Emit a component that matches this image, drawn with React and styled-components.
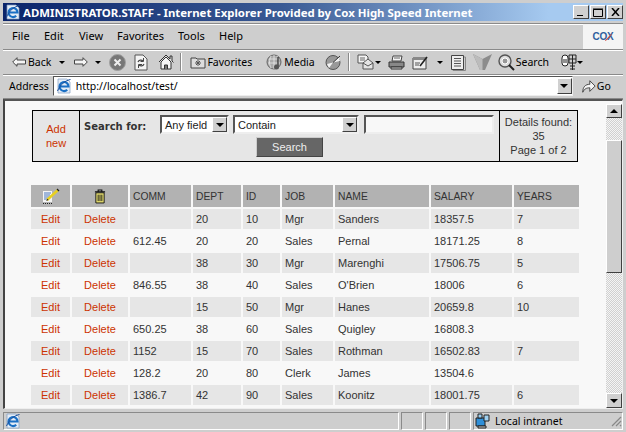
import React from 'react'
import styled, {createGlobalStyle} from 'styled-components'

const GlobalStyle = createGlobalStyle`
    html, body {
        margin: 0;
        padding: 0;
        background: #cecece;
    }
`
const bevelOut = 'border-top: 1px solid #fff; border-left: 1px solid #fff; border-right: 1px solid #404040; border-bottom: 1px solid #404040;'

const Window = styled.div`
    width: 626px;
    height: 432px;
    box-sizing: border-box;
    padding: 3px 3px 2px 3px;
    background: #cecece;
    display: flex;
    flex-direction: column;
    overflow: hidden;
    font-family: "Noto Sans", sans-serif;
    font-size: 11px;
    color: #000;
`
const TitleBar = styled.div`
    height: 18px;
    flex: none;
    display: flex;
    align-items: center;
    padding: 0 0 0 2px;
    background: linear-gradient(90deg, #0a246a 0%, #3a5a94 45%, #a6caf0 88%);
`
const TitleText = styled.div`
    flex: 1;
    margin-left: 2px;
    color: #fff;
    font-family: "Noto Sans", sans-serif;
    font-weight: 700;
    font-size: 11.4px;
    white-space: nowrap;
`
const WinButtons = styled.div`
    display: flex;
`
const WinButton = styled.div`
    width: 16px;
    height: 14px;
    box-sizing: border-box;
    background: #d0d0d0;
    ${bevelOut}
    margin-left: ${props => props.$gap || 0}px;
    display: flex;
    align-items: center;
    justify-content: center;
`
const MenuRow = styled.div`
    height: 27px;
    margin-top: 2px;
    flex: none;
    display: flex;
    align-items: stretch;
    border-top: 1px solid #8a8a8a;
    border-bottom: 1px solid #8a8a8a;
    box-shadow: inset 0 1px 0 #fff;
    box-sizing: border-box;
`
const Menu = styled.div`
    flex: 1;
    display: flex;
    align-items: center;
    padding: 0 0 3px 9px;
`
const MenuItem = styled.span`
    width: ${props => props.$w}px;
`
const Brand = styled.div`
    width: 40px;
    background: #f4f4f4;
    display: flex;
    align-items: center;
    justify-content: center;
`
const BrandMark = styled.span`
    position: relative;
    font-family: "Liberation Sans", sans-serif;
    font-weight: 700;
    font-size: 10px;
    letter-spacing: -0.2px;
    color: #2f5f9e;
    &::after {
        content: "";
        position: absolute;
        right: 1px;
        top: 6px;
        width: 9px;
        height: 1px;
        background: #d04a40;
        transform: rotate(-45deg);
    }
`
const ToolRow = styled.div`
    height: 25px;
    flex: none;
    box-sizing: border-box;
    display: flex;
    align-items: center;
    padding-left: 9px;
    border-bottom: 1px solid #8a8a8a;
    box-shadow: inset 0 1px 0 #fff;
`
const Tool = styled.div`
    display: flex;
    align-items: center;
    flex: none;
    margin-left: ${props => props.$ml || 0}px;
`
const ToolLabel = styled.span`
    font-size: 10.5px;
    margin-left: ${props => props.$ml ?? 1}px;
`
const Caret = styled.span`
    width: 0;
    height: 0;
    flex: none;
    border-left: 3px solid transparent;
    border-right: 3px solid transparent;
    border-top: 3px solid #000;
    margin-left: ${props => props.$ml || 0}px;
`
const ToolSep = styled.div`
    width: 1px;
    height: 18px;
    flex: none;
    background: #8a8a8a;
    border-right: 1px solid #fff;
    margin-left: ${props => props.$ml || 0}px;
`
const AddressRow = styled.div`
    height: 24px;
    flex: none;
    box-sizing: border-box;
    display: flex;
    align-items: center;
    padding: 0 4px 1px 6px;
    font-size: 10.5px;
    border-bottom: 1px solid #8a8a8a;
    box-shadow: inset 0 1px 0 #fff;
`
const AddressBox = styled.div`
    width: 520px;
    height: 20px;
    box-sizing: border-box;
    margin-left: 4px;
    background: #fff;
    border: 1px solid;
    border-color: #555 #eee #eee #555;
    display: flex;
    align-items: center;
    padding-left: 2px;
`
const AddressText = styled.span`
    flex: 1;
    margin-left: 4px;
`
const ComboButton = styled.div`
    width: ${props => props.$w || 15}px;
    height: ${props => props.$h || 16}px;
    flex: none;
    box-sizing: border-box;
    background: #d0d0d0;
    ${bevelOut}
    display: flex;
    align-items: center;
    justify-content: center;
`
const Arrow = styled.span`
    width: 0;
    height: 0;
    border-left: 4px solid transparent;
    border-right: 4px solid transparent;
    ${props => props.$up ? 'border-bottom: 4px solid #000;' : 'border-top: 4px solid #000;'}
`
const GoButton = styled.div`
    flex: 1;
    display: flex;
    align-items: center;
    justify-content: center;
    gap: 1px;
`
const Viewport = styled.div`
    flex: 1;
    min-height: 0;
    display: flex;
    background: #f8f8f8;
    border: 1px solid;
    border-color: #555 #eee #eee #555;
    border-top: 2px solid #555;
    border-left: 2px solid #444;
    margin: 0 0 3px 0;
`
const Page = styled.div`
    flex: 1;
    min-width: 0;
    overflow: hidden;
    padding: 9px 0 0 27px;
    font-family: "Liberation Sans", sans-serif;
    font-size: 11px;
    color: #333;
`
const SearchPanel = styled.div`
    width: 546px;
    height: 52px;
    box-sizing: border-box;
    display: flex;
    background: #e6e6e6;
    border: 1px solid #000;
`
const AddCell = styled.div`
    width: 47px;
    flex: none;
    box-sizing: border-box;
    border-right: 1px solid #000;
    display: flex;
    align-items: center;
    justify-content: center;
    text-align: center;
    line-height: 14px;
    color: #cc3300;
`
const SearchCell = styled.div`
    flex: 1;
    display: flex;
    flex-direction: column;
    padding: 4px 0 0 4px;
`
const SearchRow = styled.div`
    display: flex;
    align-items: center;
`
const SearchLabel = styled.b`
    width: 76px;
    padding-top: 3px;
    color: #333;
    font-family: "DejaVu Sans", sans-serif;
    font-size: 10px;
`
const Select = styled.div`
    width: ${props => props.$w}px;
    height: 19px;
    box-sizing: border-box;
    margin-right: ${props => props.$mr}px;
    background: #fff;
    border: 2px solid;
    border-color: #555 #eee #eee #555;
    display: flex;
    align-items: center;
    padding-left: 3px;
    justify-content: space-between;
    color: #222;
`
const TextInput = styled.div`
    width: 130px;
    height: 19px;
    box-sizing: border-box;
    background: #f8f8f8;
    border: 2px solid;
    border-color: #555 #eee #eee #555;
`
const SearchButton = styled.div`
    width: 67px;
    height: 20px;
    box-sizing: border-box;
    margin: 3px 0 0 172px;
    background: #666;
    color: #eee;
    display: flex;
    align-items: center;
    justify-content: center;
    border: 1px solid;
    border-color: #ccc #444 #444 #ccc;
`
const DetailsCell = styled.div`
    width: 78px;
    flex: none;
    box-sizing: border-box;
    border-left: 1px solid #000;
    display: flex;
    flex-direction: column;
    justify-content: center;
    text-align: center;
    line-height: 14px;
`
const Table = styled.table`
    margin: 21px 0 0 -3px;
    table-layout: fixed;
    width: 552px;
    border-collapse: separate;
    border-spacing: 2px;
`
const HeadCell = styled.th`
    height: 22px;
    padding: 0 0 0 3px;
    background: #b2b2b2;
    text-align: left;
    font-size: 10.3px;
    font-weight: 400;
    color: #333;
    vertical-align: middle;
`
const IconHeadCell = styled(HeadCell)`
    padding: 0;
    text-align: center;
    line-height: 0;
`
const Cell = styled.td`
    height: 20px;
    padding: 0 0 0 3px;
    background: ${props => props.$odd ? '#e6e6e6' : 'transparent'};
    vertical-align: middle;
`
const LinkCell = styled(Cell)`
    text-align: center;
    padding: 0;
    color: #cc3300;
`
const Scrollbar = styled.div`
    width: 16px;
    flex: none;
    margin-top: 3px;
    display: flex;
    flex-direction: column;
    background-color: #f0f0f0;
    background-image: conic-gradient(#d0d0d0 25%, #f4f4f4 0 50%, #d0d0d0 0 75%, #f4f4f4 0);
    background-size: 2px 2px;
`
const ScrollThumb = styled.div`
    height: 133px;
    margin-top: 22px;
    box-sizing: border-box;
    background: #cecece;
    ${bevelOut}
`
const ScrollSpacer = styled.div`
    flex: 1;
`
const StatusBar = styled.div`
    height: 18px;
    flex: none;
    display: flex;
    gap: 2px;
    font-size: 10.5px;
`
const StatusPane = styled.div`
    width: ${props => props.$w ? props.$w + 'px' : 'auto'};
    flex: ${props => props.$w ? 'none' : 1};
    box-sizing: border-box;
    border: 1px solid;
    border-color: #8a8a8a #fff #fff #8a8a8a;
    display: flex;
    align-items: center;
    gap: 4px;
    padding-left: 1px;
`
const Grip = styled.svg`
    margin-left: auto;
`

const IeIcon = () => (
    <svg width="16" height="16" viewBox="0 0 16 16">
        <path d="M2 1h9l3 3v11H2z" fill="#e4ecf6" stroke="#7f9cc0" strokeWidth=".7"/>
        <path d="M3.5 8.5h9a4.5 4.5 0 1 0-1.3 3.2" fill="none" stroke="#1a6fc4" strokeWidth="2.2"/>
        <path d="M1.5 13C4 7 9 2.5 14.5 1.5" fill="none" stroke="#1a4f9c" strokeWidth="1"/>
    </svg>
)
const LeftArrow = ({flip}) => (
    <svg width="14" height="10" viewBox="0 0 14 10" style={flip ? {transform: 'scaleX(-1)'} : undefined}>
        <path d="M.7 5L5 .7V3h8.5v4H5v2.3z" fill="#f4f4f4" stroke="#444"/>
    </svg>
)
const StopIcon = () => (
    <svg width="17" height="17" viewBox="0 0 17 17">
        <circle cx="8.5" cy="8.5" r="8" fill="#777" stroke="#a0a0a0"/>
        <path d="M5.5 5.5l6 6M11.5 5.5l-6 6" stroke="#eee" strokeWidth="2"/>
    </svg>
)
const RefreshIcon = () => (
    <svg width="14" height="17" viewBox="0 0 14 17">
        <path d="M1 1h8l4 4v11H1z" fill="#f4f4f4" stroke="#555"/>
        <path d="M4 8a3 3 0 0 1 5-1M10 10a3 3 0 0 1-5 1" fill="none" stroke="#444" strokeWidth="1.2"/>
        <path d="M9.5 4v3.5H6.5M4.5 14v-3.5H8" fill="none" stroke="#444"/>
    </svg>
)
const HomeIcon = () => (
    <svg width="16" height="16" viewBox="0 0 16 16">
        <path d="M1 8l7-7 4 4V2h2v5l1.5 1.5" fill="#ddd" stroke="#333"/>
        <path d="M3 8v7h10V8L8 3z" fill="#f6f6f6" stroke="#333"/>
        <path d="M6.5 15v-4h3v4" fill="#777" stroke="#333"/>
    </svg>
)
const FavIcon = () => (
    <svg width="16" height="14" viewBox="0 0 16 14">
        <path d="M1 3h5l1 1h8v9H1z" fill="#ddd" stroke="#444"/>
        <path d="M8 5v6M5 8h6M6 6l4 4M10 6l-4 4" stroke="#555"/>
    </svg>
)
const MediaIcon = () => (
    <svg width="17" height="17" viewBox="0 0 17 17">
        <circle cx="8" cy="8" r="7" fill="#aaa" stroke="#666"/>
        <path d="M3 5h10M2 9h12M8 1v14M5 2c-2 4-2 8 0 12M11 2c2 4 2 8 0 12" fill="none" stroke="#e8e8e8" strokeWidth=".8"/>
        <path d="M12 3v9" stroke="#222" strokeWidth="1.2"/>
        <circle cx="10.5" cy="13" r="2.5" fill="#555"/>
    </svg>
)
const HistoryIcon = () => (
    <svg width="16" height="16" viewBox="0 0 16 16">
        <circle cx="8" cy="8.5" r="7" fill="#999" stroke="#555"/>
        <path d="M8 8.5L14 3l1 4zM8 8.5L2 10l2 4z" fill="#f4f4f4"/>
        <path d="M8 8.5L15 2" stroke="#333"/>
    </svg>
)
const MailIcon = () => (
    <svg width="18" height="17" viewBox="0 0 18 17">
        <path d="M1 1h8l2 2v6H1z" fill="#f4f4f4" stroke="#555"/>
        <path d="M3 4h5M3 6h5" stroke="#666"/>
        <path d="M6 15V9l5-4 5 4v6z" fill="#e4e4e4" stroke="#555"/>
        <path d="M6 9l5 3 5-3" fill="none" stroke="#555"/>
    </svg>
)
const PrintIcon = () => (
    <svg width="17" height="15" viewBox="0 0 17 15">
        <path d="M5 1h9l-1 5H4z" fill="#f4f4f4" stroke="#444"/>
        <path d="M1 7h15v5H1z" fill="#888" stroke="#333"/>
        <path d="M3 12h11v2H3z" fill="#ccc" stroke="#333"/>
        <path d="M6 3h6" stroke="#666"/>
    </svg>
)
const EditIcon = () => (
    <svg width="17" height="15" viewBox="0 0 17 15">
        <path d="M1 3h13v11H1z" fill="#eee" stroke="#444"/>
        <path d="M1 3h13v2H1z" fill="#888"/>
        <path d="M3 8h5M3 10h4" stroke="#555"/>
        <path d="M8 11l7-9" stroke="#222" strokeWidth="1.6"/>
    </svg>
)
const NoteIcon = () => (
    <svg width="16" height="17" viewBox="0 0 16 17">
        <path d="M1.5 1.5h12v14h-12z" fill="#eee" stroke="#444"/>
        <path d="M14 3h1.5v13.5H3V16" fill="none" stroke="#888"/>
        <path d="M4 4.5h7M4 7h7M4 9.5h7M4 12h7" stroke="#555"/>
    </svg>
)
const FilterIcon = () => (
    <svg width="19" height="16" viewBox="0 0 19 16">
        <path d="M0 0l9.500 5L19 0l-7 16H7z" fill="#8c8c8c"/>
        <path d="M0 0l9.500 5v11H7z" fill="#bcbcbc"/>
    </svg>
)
const SearchIcon = () => (
    <svg width="17" height="17" viewBox="0 0 17 17">
        <circle cx="7" cy="7" r="6" fill="#ddd" stroke="#555" strokeWidth="1.4"/>
        <circle cx="7" cy="7" r="3" fill="#999" stroke="#fff"/>
        <path d="M11 11l5 5" stroke="#222" strokeWidth="2"/>
    </svg>
)
const MessengerIcon = () => (
    <svg width="17" height="17" viewBox="0 0 17 17">
        <path d="M2 4a3 3 0 0 1 6 0v5a3 3 0 0 1-6 0z" fill="#fff" stroke="#222"/>
        <path d="M3 6h4M3 8h4" stroke="#222"/>
        <path d="M9 1h7v8H9zM9 5h7M12.5 1v15M10 12h5M10 15h5" fill="none" stroke="#222"/>
    </svg>
)
const GoIcon = () => (
    <svg width="15" height="17" viewBox="0 0 17 17">
        <path d="M2 15C2 9 5 6 10 6V2l6 6-6 6v-4C6 10 4 11 2 15z" fill="#f6f6f6" stroke="#333"/>
    </svg>
)
const ZoneIcon = () => (
    <svg width="16" height="16" viewBox="0 0 16 16">
        <path d="M1 5h9v8H1z" fill="#2f8fd8" stroke="#222"/>
        <path d="M3 1h4v4H3zM9 2h5v6H9z" fill="#9fd0f0" stroke="#222"/>
        <path d="M3 13h8v2H3z" fill="#ccc" stroke="#222"/>
    </svg>
)
const PencilNote = () => (
    <svg width="19" height="17" viewBox="0 0 19 17">
        <path d="M2 3h9v11H2z" fill="#f4f4f4"/>
        <path d="M3 5h7M3 7h6M3 9h5M3 11h5" stroke="#4a78c0"/>
        <path d="M2 15.5h10" stroke="#222" strokeDasharray="1 1"/>
        <path d="M6 12L17 2" stroke="#e8d020" strokeWidth="2.5"/>
        <path d="M16 1l2 2" stroke="#222" strokeWidth="1.2"/>
        <path d="M5 13l1.5-2.200 1 1.200z" fill="#222"/>
    </svg>
)
const TrashIcon = () => (
    <svg width="12" height="15" viewBox="0 0 13 16">
        <path d="M1 3h11M4.5 3V1h4v2" fill="none" stroke="#111" strokeWidth="1.2"/>
        <path d="M2 4h9v11H2z" fill="#e8e070" stroke="#111"/>
        <path d="M4.5 6v7M6.5 6v7M8.5 6v7" stroke="#111"/>
    </svg>
)

const columns = [
    {key: 'edit', w: 39},
    {key: 'del', w: 56},
    {key: 'comm', w: 61, label: 'COMM'},
    {key: 'dept', w: 48, label: 'DEPT'},
    {key: 'id', w: 37, label: 'ID'},
    {key: 'job', w: 51, label: 'JOB'},
    {key: 'name', w: 94, label: 'NAME'},
    {key: 'salary', w: 81, label: 'SALARY'},
    {key: 'years', w: 65, label: 'YEARS'},
]

const rows = [
    {comm: '', dept: '20', id: '10', job: 'Mgr', name: 'Sanders', salary: '18357.5', years: '7'},
    {comm: '612.45', dept: '20', id: '20', job: 'Sales', name: 'Pernal', salary: '18171.25', years: '8'},
    {comm: '', dept: '38', id: '30', job: 'Mgr', name: 'Marenghi', salary: '17506.75', years: '5'},
    {comm: '846.55', dept: '38', id: '40', job: 'Sales', name: "O'Brien", salary: '18006', years: '6'},
    {comm: '', dept: '15', id: '50', job: 'Mgr', name: 'Hanes', salary: '20659.8', years: '10'},
    {comm: '650.25', dept: '38', id: '60', job: 'Sales', name: 'Quigley', salary: '16808.3', years: ''},
    {comm: '1152', dept: '15', id: '70', job: 'Sales', name: 'Rothman', salary: '16502.83', years: '7'},
    {comm: '128.2', dept: '20', id: '80', job: 'Clerk', name: 'James', salary: '13504.6', years: ''},
    {comm: '1386.7', dept: '42', id: '90', job: 'Sales', name: 'Koonitz', salary: '18001.75', years: '6'},
]

const dataColumns = columns.filter(col => col.label)

const App = () => {
    return (
        <Window>
            <GlobalStyle />
            <TitleBar>
                <IeIcon />
                <TitleText>ADMINISTRATOR.STAFF - Internet Explorer Provided by Cox High Speed Internet</TitleText>
                <WinButtons>
                    <WinButton><svg width="8" height="8"><path d="M0 7h6v1H0z"/></svg></WinButton>
                    <WinButton $gap={1}><svg width="10" height="9"><path d="M.5 1.5h9v7h-9zM0 1h10" fill="none" stroke="#000"/></svg></WinButton>
                    <WinButton $gap={1}><svg width="9" height="8"><path d="M1 0l7 8M8 0L1 8" stroke="#000" strokeWidth="1.5"/></svg></WinButton>
                </WinButtons>
            </TitleBar>
            <MenuRow>
                <Menu>
                    <MenuItem $w={32}>File</MenuItem>
                    <MenuItem $w={35}>Edit</MenuItem>
                    <MenuItem $w={38}>View</MenuItem>
                    <MenuItem $w={61}>Favorites</MenuItem>
                    <MenuItem $w={41}>Tools</MenuItem>
                    <MenuItem $w={30}>Help</MenuItem>
                </Menu>
                <Brand><BrandMark>COX</BrandMark></Brand>
            </MenuRow>
            <ToolRow>
                <Tool><LeftArrow /><ToolLabel $ml={2}>Back</ToolLabel><Caret $ml={8} /></Tool>
                <Tool $ml={9}><LeftArrow flip /><Caret $ml={7} /></Tool>
                <Tool $ml={8}><StopIcon /></Tool>
                <Tool $ml={8}><RefreshIcon /></Tool>
                <Tool $ml={10}><HomeIcon /></Tool>
                <ToolSep $ml={6} />
                <Tool $ml={8}><FavIcon /><ToolLabel>Favorites</ToolLabel></Tool>
                <Tool $ml={14}><MediaIcon /><ToolLabel>Media</ToolLabel></Tool>
                <Tool $ml={10}><HistoryIcon /></Tool>
                <ToolSep $ml={7} />
                <Tool $ml={7}><MailIcon /><Caret /></Tool>
                <Tool $ml={7}><PrintIcon /></Tool>
                <Tool $ml={7}><EditIcon /><Caret $ml={8} /></Tool>
                <Tool $ml={7}><NoteIcon /></Tool>
                <Tool $ml={7}><FilterIcon /></Tool>
                <Tool $ml={6}><SearchIcon /><ToolLabel>Search</ToolLabel></Tool>
                <Tool $ml={11}><MessengerIcon /><Caret /></Tool>
            </ToolRow>
            <AddressRow>
                <span>Address</span>
                <AddressBox>
                    <IeIcon />
                    <AddressText>http://localhost/test/</AddressText>
                    <ComboButton><Arrow /></ComboButton>
                </AddressBox>
                <GoButton><GoIcon />Go</GoButton>
            </AddressRow>
            <Viewport>
                <Page>
                    <SearchPanel>
                        <AddCell>Add<br />new</AddCell>
                        <SearchCell>
                            <SearchRow>
                                <SearchLabel>Search for:</SearchLabel>
                                <Select $w={69} $mr={4}>Any field<ComboButton $h={15}><Arrow /></ComboButton></Select>
                                <Select $w={126} $mr={5}>Contain<ComboButton $h={15}><Arrow /></ComboButton></Select>
                                <TextInput />
                            </SearchRow>
                            <SearchButton>Search</SearchButton>
                        </SearchCell>
                        <DetailsCell>
                            <span>Details found:</span>
                            <span>35</span>
                            <span>Page 1 of 2</span>
                        </DetailsCell>
                    </SearchPanel>
                    <Table>
                        <colgroup>
                            {columns.map(col => <col key={col.key} style={{width: col.w}} />)}
                        </colgroup>
                        <thead>
                            <tr>
                                <IconHeadCell><PencilNote /></IconHeadCell>
                                <IconHeadCell><TrashIcon /></IconHeadCell>
                                {dataColumns.map(col => <HeadCell key={col.key}>{col.label}</HeadCell>)}
                            </tr>
                        </thead>
                        <tbody>
                            {rows.map((row, i) => (
                                <tr key={row.id}>
                                    <LinkCell $odd={i % 2 === 0}>Edit</LinkCell>
                                    <LinkCell $odd={i % 2 === 0}>Delete</LinkCell>
                                    {dataColumns.map(col => <Cell key={col.key} $odd={i % 2 === 0}>{row[col.key]}</Cell>)}
                                </tr>
                            ))}
                        </tbody>
                    </Table>
                </Page>
                <Scrollbar>
                    <ComboButton $w={16} $h={14}><Arrow $up /></ComboButton>
                    <ScrollThumb />
                    <ScrollSpacer />
                    <ComboButton $w={16} $h={15}><Arrow /></ComboButton>
                </Scrollbar>
            </Viewport>
            <StatusBar>
                <StatusPane><IeIcon /></StatusPane>
                <StatusPane $w={22} />
                <StatusPane $w={22} />
                <StatusPane $w={22} />
                <StatusPane $w={150}>
                    <ZoneIcon />Local intranet
                    <Grip width="12" height="12" viewBox="0 0 12 12">
                        <path d="M11 2L2 11M11 6l-5 5M11 10l-1 1" stroke="#888" strokeWidth="1.2"/>
                    </Grip>
                </StatusPane>
            </StatusBar>
        </Window>
    )
}

export default App
